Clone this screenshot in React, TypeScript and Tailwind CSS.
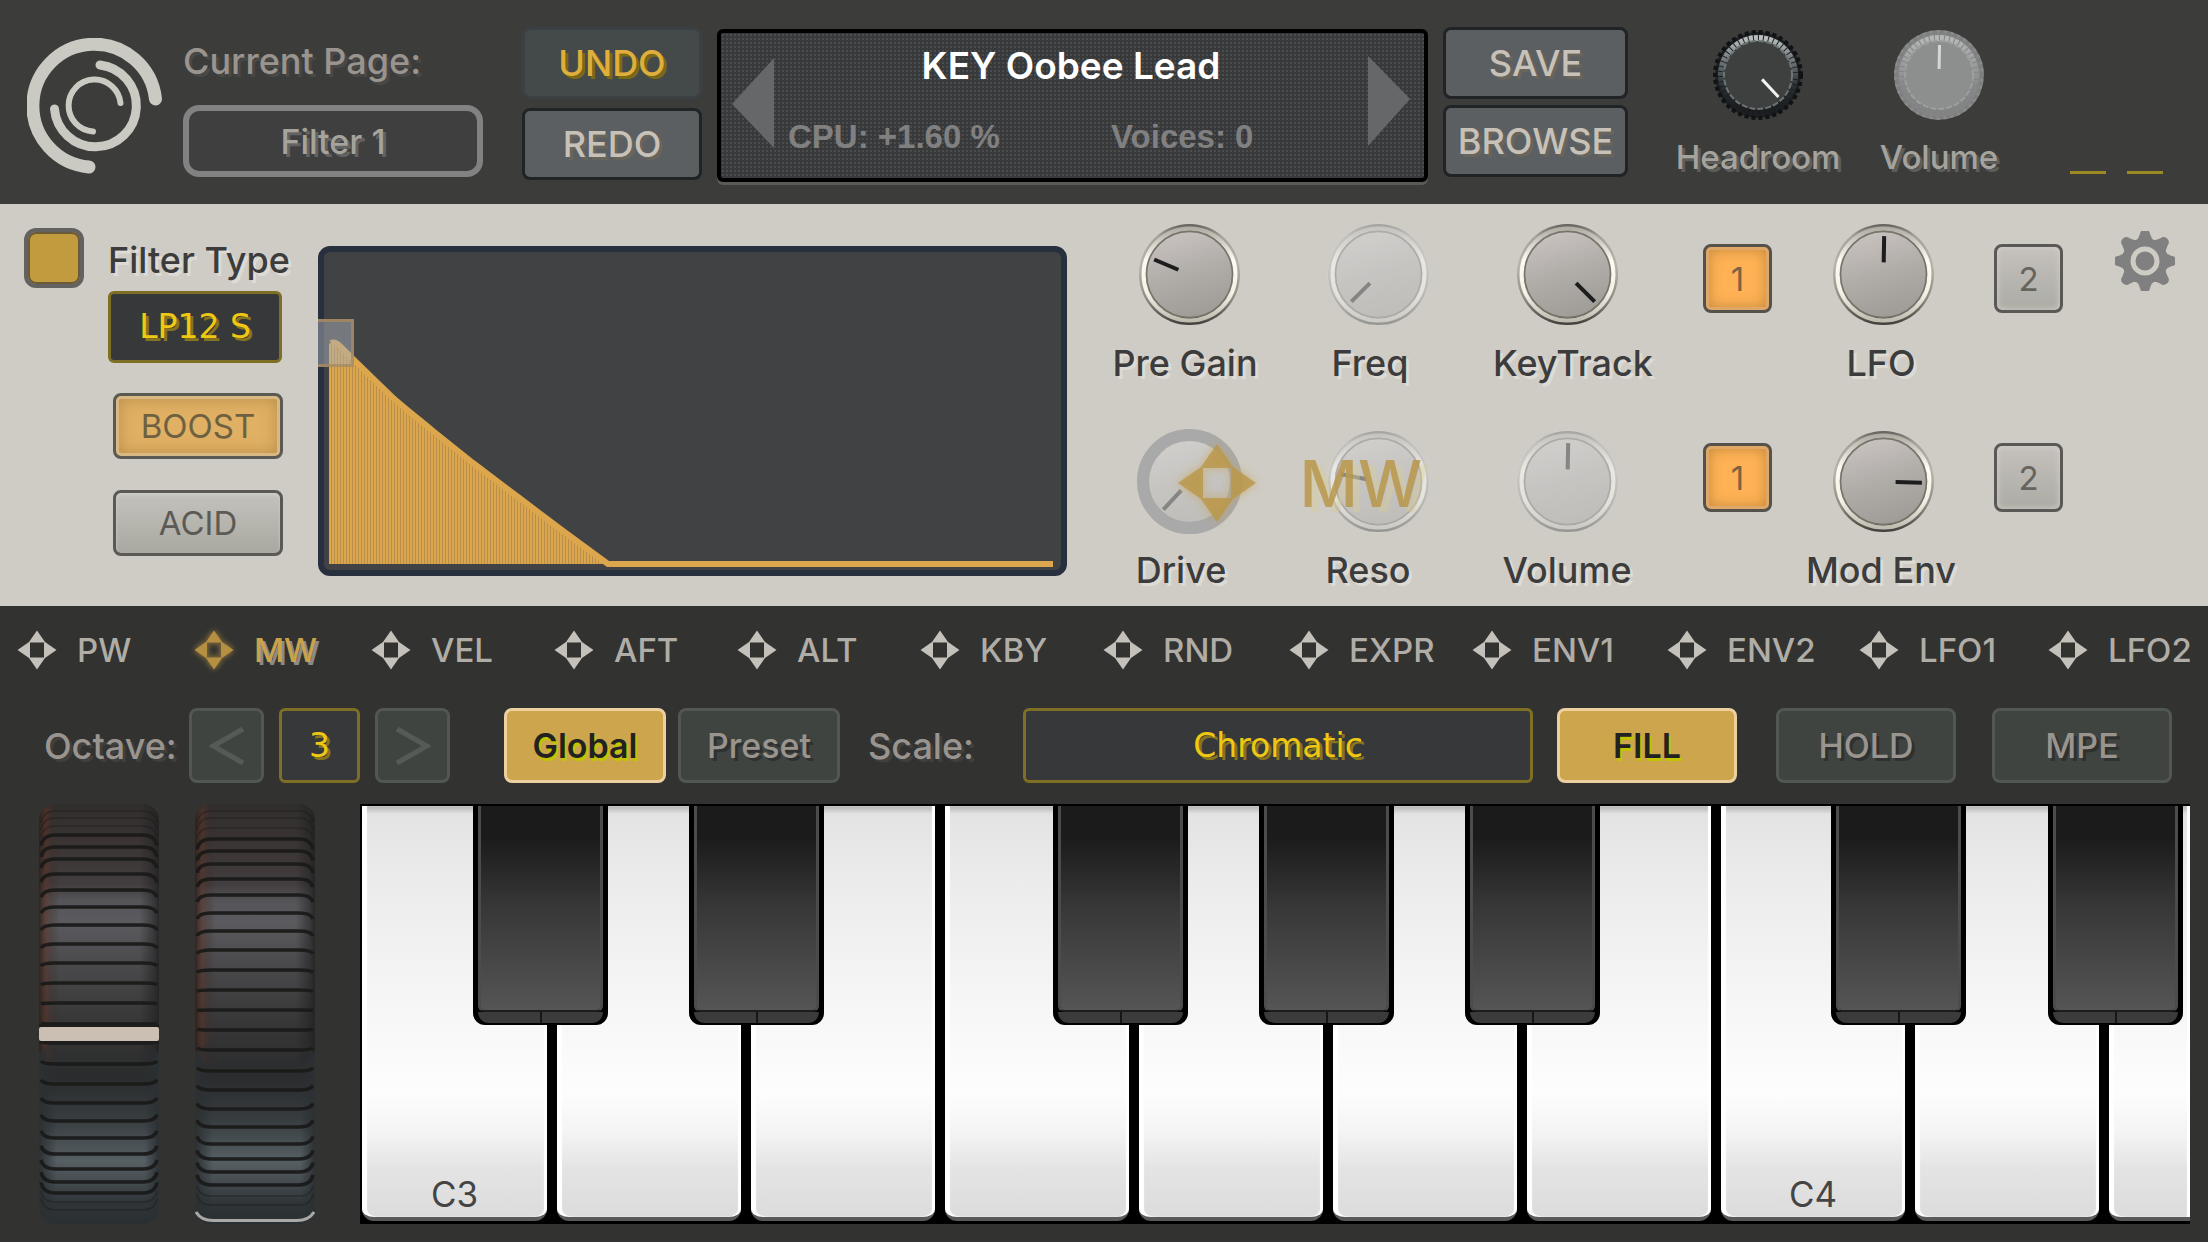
import React, { useState } from 'react';
import { clsx } from 'clsx';

const KNOB_LABEL = 'text-[36px] leading-10 font-medium text-[#3c3c3c] whitespace-nowrap [text-shadow:3px_3px_0_#dedbd5]';
const GOLD_FIELD =
  'appearance-none rounded-md border-3 border-[#7f6f25] bg-[#373839] text-center text-[33px] text-[#f0c814] [font-family:"DejaVu_Sans",sans-serif] [text-align-last:center] [text-shadow:3px_3px_0_#86741f] outline-none';
const TOP_BUTTON = 'h-18 w-full rounded-lg border-3 text-[36px] leading-10 font-medium';
const TOP_GREY = 'border-[#202426] bg-[#5b5f62] text-[#c8c1b8] [text-shadow:3px_3px_0_#68655c]';

const modSources = ['PW', 'MW', 'VEL', 'AFT', 'ALT', 'KBY', 'RND', 'EXPR', 'ENV1', 'ENV2', 'LFO1', 'LFO2'];

const whiteKeys = ['C3', 'D3', 'E3', 'F3', 'G3', 'A3', 'B3', 'C4', 'D4', 'E4'];

// left edge of each black key, in units of the 1830 wide keybed
const KEYBED = 1830;
const blackKeys = [
  { note: 'C#3', x: 113 },
  { note: 'D#3', x: 329 },
  { note: 'F#3', x: 693 },
  { note: 'G#3', x: 899 },
  { note: 'A#3', x: 1105 },
  { note: 'C#4', x: 1471 },
  { note: 'D#4', x: 1688 },
];

const Logo = () => (
  <svg viewBox="0 0 136 136" className="mt-[11px] size-[136px] shrink-0" fill="none" stroke="#cac9c2" strokeLinecap="round">
    <path d="M128.500 61 A61.500 61.500 0 1 0 62 129" strokeWidth="13" />
    <path d="M73 27 A41 41 0 1 1 27.500 71" strokeWidth="9" />
    <path d="M93.500 65 A26 26 0 1 0 66 93.500" strokeWidth="6" />
  </svg>
);

const Diamond = ({ color, className }: { color: string; className?: string }) => (
  <svg viewBox="0 0 40 40" className={clsx('shrink-0', className)} fill={color}>
    <path fillRule="evenodd" d="M20 0.500 L28 12 L39.500 20 L28 28 L20 39.500 L12 28 L0.500 20 L12 12 Z M13 12.500 V27.500 H27 V12.500 Z" />
  </svg>
);

const Gear = () => (
  <svg viewBox="-30 -30 60 60" className="size-[60px]" fill="#808080">
    <circle r="23" />
    {[0, 45, 90, 135, 180, 225, 270, 315].map((a) => (
      <path key={a} transform={`rotate(${a})`} d="M-10 -19 Q-6.500 -22 -5 -27 A5 4.600 0 0 1 5 -27 Q6.500 -22 10 -19 Z" />
    ))}
    <circle r="12" fill="none" stroke="#cfccc5" strokeWidth="5" />
  </svg>
);

const KnobDefs = () => (
  <svg className="absolute size-0" aria-hidden="true">
    <defs>
      <linearGradient id="rim" x1="0" y1="0" x2="0" y2="1">
        <stop offset="0" stopColor="#62605b" />
        <stop offset="0.12" stopColor="#a5a29a" />
        <stop offset="0.4" stopColor="#b7b4ac" />
        <stop offset="0.75" stopColor="#8d8a82" />
        <stop offset="1" stopColor="#3f3e3a" />
      </linearGradient>
      <linearGradient id="shine" x1="0" y1="0" x2="0" y2="1">
        <stop offset="0" stopColor="#b1aea6" />
        <stop offset="0.35" stopColor="#fdfbf2" />
        <stop offset="0.7" stopColor="#f4f1e6" />
        <stop offset="1" stopColor="#c0bcb0" />
      </linearGradient>
      <linearGradient id="face" x1="0.3" y1="0" x2="0.6" y2="1">
        <stop offset="0" stopColor="#c9c3c0" />
        <stop offset="0.5" stopColor="#b0aca8" />
        <stop offset="1" stopColor="#9f9c97" />
      </linearGradient>
      <linearGradient id="darkRim" x1="0" y1="0" x2="0" y2="1">
        <stop offset="0" stopColor="#b9bdbd" />
        <stop offset="0.35" stopColor="#666d70" />
        <stop offset="0.65" stopColor="#2a2f32" />
        <stop offset="1" stopColor="#191b1c" />
      </linearGradient>
    </defs>
  </svg>
);

type KnobProps = {
  name: string;
  angle: number;
  dim?: boolean;
  ring?: boolean;
  labelClass?: string;
  children?: React.ReactNode;
};

const Knob = ({ name, angle, dim, ring, labelClass, children }: KnobProps) => (
  <label className="flex w-40 flex-col items-center gap-[18px]">
    <span className="relative block size-[101px]">
      <svg viewBox="-50 -50 100 100" className="size-full overflow-visible">
        <circle r="50" fill="url(#rim)" />
        <circle r="45.500" fill="none" stroke="url(#shine)" strokeWidth="4" />
        <circle r="42.500" fill="url(#face)" stroke="#77736a" strokeWidth="1.500" />
        <line y1="-12" y2="-38" stroke="#1d1d1d" strokeWidth="4" transform={`rotate(${angle})`} />
        {dim && <circle r="50.500" fill="#d8d8d6" fillOpacity="0.560" />}
        {ring && <circle r="46" fill="none" stroke="#a9a9a9" strokeWidth="12" />}
      </svg>
      {children}
      <input type="range" min={-137} max={137} defaultValue={angle} className="absolute inset-0 size-full opacity-0" />
    </span>
    <span className={clsx(KNOB_LABEL, labelClass)}>{name}</span>
  </label>
);

const HeaderKnob = ({ name, angle, dim, className }: { name: string; angle: number; dim?: boolean; className: string }) => (
  <label className={clsx('mt-[3px] flex shrink-0 flex-col items-center gap-[17px]', className)}>
    <span className="relative block size-[90px]">
      <svg viewBox="-45 -45 90 90" className="size-full">
        <circle r="43" fill="#1d2022" />
        <circle r="43" fill="none" stroke="#101213" strokeWidth="4" strokeDasharray="4 3" />
        <circle r="37" fill="none" stroke="url(#darkRim)" strokeWidth="6" strokeDasharray="4 1" />
        <circle r="34" fill="#3d403f" stroke="#6d7474" strokeWidth="2" strokeDasharray="6 2" />
        {dim && <circle r="45" fill="#b4b4b4" fillOpacity="0.680" />}
        <line y1="-6" y2="-30" stroke={dim ? '#d6d6d6' : '#f2f2f2'} strokeWidth="3" transform={`rotate(${angle})`} />
      </svg>
      <input type="range" min={-137} max={137} defaultValue={angle} className="absolute inset-0 size-full opacity-0" />
    </span>
    <span className="text-[33px] leading-10 font-medium text-[#a5a39c] [text-shadow:3px_3px_0_#5d5d5b]">{name}</span>
  </label>
);

const SlotButton = ({ slot, on, className }: { slot: number; on?: boolean; className?: string }) => (
  <button
    type="button"
    className={clsx(
      'size-[69px] shrink-0 rounded-lg border-3 text-[33px] leading-8 font-normal',
      on
        ? 'border-[#55524c] bg-[#ffb255] text-[#7b6440] shadow-[inset_0_0_0_3px_#dfa868,inset_0_0_14px_3px_#c48a3e]'
        : 'border-[#5a5955] bg-linear-to-b from-[#c5c1bd] to-[#acaba4] text-[#66645c] shadow-[inset_0_0_6px_#d5d3cd]',
      className,
    )}
  >
    {slot}
  </button>
);

const FilterGraph = () => (
  <div className="relative mt-[22px] ml-[35px] h-[330px] min-w-0 flex-1 rounded-xl border-6 border-[#28303f] bg-[#414243]">
    <svg viewBox="0 0 737 318" preserveAspectRatio="none" className="block size-full">
      <defs>
        <pattern id="bars" width="3" height="8" patternUnits="userSpaceOnUse">
          <rect width="3" height="8" fill="#dca64d" />
          <rect x="1" width="1" height="8" fill="#b88e4c" />
        </pattern>
      </defs>
      <path d="M5 312 V92 L8 90 L17 95 L30 108 L68 143 L109 178 L149 210 L194 244 L239 279 L282 312 Z" fill="url(#bars)" />
      <path d="M7 91 Q11 89 17 95 L30 108 L68 145 C80 156 95 167 109 179 L149 211 L194 245 L239 279 L284 312 H729" fill="none" stroke="#dca64d" strokeWidth="6" />
    </svg>
    <div className="absolute top-[67px] -left-1.5 h-12 w-9 border-y-3 border-r-3 border-[#a98a5f]/80 bg-[#a9adb5]/50" />
  </div>
);

const toggleStyle = (on: boolean) =>
  on
    ? 'bg-[#e0b064] text-[#6e6142] shadow-[inset_0_0_0_3px_#d9b983,inset_0_0_16px_3px_#b98f4c]'
    : 'bg-linear-to-b from-[#c3c2bd] to-[#a9a8a0] text-[#5b5a54] shadow-[inset_0_2px_3px_#d0cfca]';

const chipStyle = (on: boolean) =>
  on
    ? 'border-[#ecd0a0] bg-[#cca54c] text-[#222] font-semibold [text-shadow:2px_3px_0_#c2c400]'
    : 'border-[#515753] bg-[#3f4440] text-[#9a948f] font-medium [text-shadow:3px_3px_0_#2f3130]';

const CHIP = 'h-[75px] shrink-0 rounded-lg border-3 text-[34px] leading-10';

// rib edges, measured down a 420 unit tall wheel
const pitchRibs = [7, 14, 22, 31, 43, 55, 70, 86, 103, 121, 140, 159, 179, 199, 220, 239, 260, 280, 299, 317, 334, 350, 365, 378, 389, 398, 406];
const modRibs = [7, 14, 24, 35, 47, 60, 75, 91, 109, 127, 146, 166, 186, 206, 226, 246, 267, 286, 305, 323, 340, 355, 368, 381, 392, 401];

const Wheel = ({ id, name, ribs, className }: { id: string; name: string; ribs: number[]; className?: string }) => (
  <label className={clsx('relative block h-[420px] w-[120px] shrink-0', className)}>
    <svg viewBox="0 0 120 420" className="block size-full">
      <defs>
        <linearGradient id={id} x1="0" y1="0" x2="0" y2="1">
          <stop offset="0" stopColor="#302e2c" />
          <stop offset="0.1" stopColor="#3b3535" />
          <stop offset="0.19" stopColor="#423d3e" />
          <stop offset="0.23" stopColor="#555458" />
          <stop offset="0.28" stopColor="#5b5a5e" />
          <stop offset="0.38" stopColor="#4a4a4d" />
          <stop offset="0.52" stopColor="#383737" />
          <stop offset="0.65" stopColor="#2a2c2d" />
          <stop offset="0.75" stopColor="#373c3f" />
          <stop offset="0.85" stopColor="#565f64" />
          <stop offset="0.91" stopColor="#41484c" />
          <stop offset="0.95" stopColor="#2f3437" />
          <stop offset="1" stopColor="#2a2f32" />
        </linearGradient>
        <linearGradient id={`${id}-side`}>
          <stop offset="0" stopColor="#2a201c" stopOpacity="0.9" />
          <stop offset="0.06" stopColor="#5a3327" stopOpacity="0.55" />
          <stop offset="0.17" stopColor="#2a2625" stopOpacity="0" />
          <stop offset="0.84" stopColor="#222" stopOpacity="0" />
          <stop offset="0.96" stopColor="#222" stopOpacity="0.6" />
          <stop offset="1" stopColor="#222" stopOpacity="0.9" />
        </linearGradient>
        <linearGradient id={`${id}-low`}>
          <stop offset="0" stopColor="#2b3033" />
          <stop offset="0.15" stopColor="#2b3033" stopOpacity="0" />
          <stop offset="0.88" stopColor="#2b3033" stopOpacity="0" />
          <stop offset="1" stopColor="#2b3033" />
        </linearGradient>
      </defs>
      <rect width="120" height="420" rx="16" fill={`url(#${id})`} />
      <rect width="120" height="260" rx="16" fill={`url(#${id}-side)`} />
      <rect y="240" width="120" height="180" rx="16" fill={`url(#${id}-low)`} />
      {ribs.map((y) => {
        const bend = (210 - y) / 17;
        const nearEdge = Math.min(y, 420 - y) < 30;
        return (
          <path
            key={y}
            d={`M2 ${y + bend} Q4 ${y} 16 ${y} H104 Q116 ${y} 118 ${y + bend}`}
            fill="none"
            stroke="#1a1a19"
            strokeWidth={nearEdge ? 1.5 : 3.5}
            strokeOpacity={nearEdge ? 0.4 : 0.95}
          />
        );
      })}
      {id === 'pitch' ? (
        <>
          <rect y="220" width="120" height="20" fill="#1d1d1c" />
          <rect y="223" width="120" height="14" rx="2" fill="#cbbfb4" />
        </>
      ) : (
        <path d="M1 408 Q6 416.500 18 416.500 H102 Q114 416.500 119 408" fill="none" stroke="#a9a9a7" strokeWidth="3" />
      )}
    </svg>
    <input type="range" aria-label={name} className="absolute inset-0 size-full opacity-0" />
  </label>
);

const Keyboard = () => (
  <div className="relative ml-[45px] h-[420px] min-w-0 flex-1 overflow-hidden bg-black pt-0.5">
    <div className="grid h-full grid-cols-[192fr_194fr_194fr_194fr_194fr_194fr_194fr_194fr_194fr_86fr]">
      {whiteKeys.map((note, i) => (
        <button
          key={note}
          type="button"
          aria-label={note}
          className={clsx(
            'mb-[3px] flex items-end justify-center border-b-4 border-b-[#5a5a5a] pb-[3px] text-[35px] leading-10 font-normal text-[#444]',
            'bg-[linear-gradient(#b5b5b5,#e3e3e3_2%,#ececec_20%,#f5f5f5_45%,#fdfdfd_70%,#f3f3f3_80%,#e4e4e4_88%,#dcdcdc)] shadow-[inset_5px_0_1px_#fff,inset_-3px_0_1px_#fff]',
            i === 0 ? 'ml-0.5' : 'ml-[5px]',
            i === whiteKeys.length - 1 ? 'rounded-bl-xl' : 'mr-[5px] rounded-b-xl',
          )}
        >
          {note.startsWith('C') ? note : ''}
        </button>
      ))}
    </div>
    {blackKeys.map(({ note, x }) => (
      <button
        key={note}
        type="button"
        aria-label={note}
        style={{ left: `${(x / KEYBED) * 100}%` }}
        className="absolute top-0 flex h-[221px] w-[7.4%] flex-col items-center rounded-b-xl bg-black px-[5px] pt-0.5 pb-0.5"
      >
        <span className="h-[206px] w-full shrink-0 rounded-b-md border-x-3 border-b-2 border-x-[#4c4c4c] border-b-[#1c1c1c] bg-linear-to-b from-[#1b1b1b] from-15% via-[#383838] to-[#555]" />
        <span className="flex w-full flex-1 justify-center rounded-b-xl bg-[#3b3b3b]">
          <span className="h-full w-0.5 bg-[#161616]" />
        </span>
      </button>
    ))}
  </div>
);

export default function App() {
  const [boost, setBoost] = useState(true);
  const [acid, setAcid] = useState(false);
  const [scope, setScope] = useState('Global');
  const [fill, setFill] = useState(true);
  const [hold, setHold] = useState(false);
  const [mpe, setMpe] = useState(false);

  return (
    <div className="min-h-screen bg-[#323230] [font-family:Inter,sans-serif]">
      <KnobDefs />

      {/* Top bar */}
      <header className="flex items-start bg-[#3c3c3a] pt-[27px] pr-[45px] pb-[22px] pl-[27px]">
        <Logo />
        <div className="mt-[14px] ml-5 flex w-[300px] shrink-0 flex-col gap-6">
          <label htmlFor="page" className="text-[36px] leading-10 font-medium text-[#9a948f] [text-shadow:3px_3px_0_#484847]">
            Current Page:
          </label>
          <select
            id="page"
            className="h-18 w-full appearance-none rounded-2xl border-6 border-[#828282] bg-[#3f3f3f] text-center text-[34px] font-medium text-[#a5a39c] [text-align-last:center] [text-shadow:3px_3px_0_#626262]"
          >
            <option>Filter 1</option>
          </select>
        </div>
        <div className="ml-[39px] flex w-[180px] shrink-0 flex-col gap-[9px]">
          <button type="button" className={clsx(TOP_BUTTON, 'border-[#3b4044] bg-[#444949] text-[#dfae3c] [text-shadow:3px_3px_0_#7a6a14]')}>
            UNDO
          </button>
          <button type="button" className={clsx(TOP_BUTTON, TOP_GREY)}>REDO</button>
        </div>

        <div className="mt-0.5 ml-[15px] flex h-[153px] min-w-0 flex-1 rounded-md border-4 border-black bg-[#38393b] bg-[radial-gradient(#4b4c4e_1px,transparent_1px)] bg-size-[4px_4px] pr-[14px] pl-[11px] shadow-[0_3px_0_#5a5a58]">
          <button type="button" aria-label="Previous preset" className="mt-[25px] h-[90px] shrink-0">
            <svg viewBox="0 0 42 90" className="h-[90px] w-[42px]"><path d="M0 46 L42 0 V90 Z" fill="#666769" /></svg>
          </button>
          <div className="min-w-0 flex-1 pt-[11px]">
            <p className="text-center text-[37px] leading-11 font-semibold text-white">KEY Oobee Lead</p>
            <div className="mt-[29px] grid grid-cols-[323fr_257fr] pl-[14px] text-[33px] leading-10 font-bold whitespace-nowrap text-[#808080] [font-family:'Liberation_Sans',sans-serif]">
              <p>CPU: +1.60 %</p>
              <p>Voices: 0</p>
            </div>
          </div>
          <button type="button" aria-label="Next preset" className="mt-[23px] h-[90px] shrink-0">
            <svg viewBox="0 0 42 90" className="h-[90px] w-[42px]"><path d="M42 43 L0 0 V90 Z" fill="#666769" /></svg>
          </button>
        </div>

        <div className="ml-[15px] flex w-[185px] shrink-0 flex-col gap-1.5">
          <button type="button" className={clsx(TOP_BUTTON, TOP_GREY)}>SAVE</button>
          <button type="button" className={clsx(TOP_BUTTON, TOP_GREY)}>BROWSE</button>
        </div>
        <HeaderKnob name="Headroom" angle={137} className="ml-[45px] w-[170px]" />
        <HeaderKnob name="Volume" angle={1} dim className="ml-9 w-30" />
        <div className="mt-36 ml-[71px] flex shrink-0 gap-[21px]">
          <span className="h-[3px] w-9 bg-[#9c8a22]" />
          <span className="h-[3px] w-9 bg-[#9c8a22]" />
        </div>
      </header>

      {/* Filter panel */}
      <main className="flex items-start bg-[#cfccc5] pt-5 pr-[33px] pb-4 pl-6">
        <input
          type="checkbox"
          aria-label="Filter on"
          defaultChecked
          className="mt-1 size-[60px] shrink-0 appearance-none rounded-xl border-4 border-[#636260] bg-[#c29b3f] shadow-[inset_0_0_0_2px_#6b5a3a]"
        />
        <div className="mt-4 ml-6 flex w-[175px] shrink-0 flex-col">
          <label htmlFor="filter-type" className={KNOB_LABEL}>Filter Type</label>
          <select id="filter-type" className={clsx(GOLD_FIELD, 'mt-[11px] h-18 w-[174px]')}>
            <option>LP12 S</option>
          </select>
          <button
            type="button"
            onClick={() => setBoost(!boost)}
            className={clsx('mt-[30px] ml-[5px] h-[66px] rounded-lg border-3 border-[#5b5953] text-[33px] leading-10', toggleStyle(boost))}
          >
            BOOST
          </button>
          <button
            type="button"
            onClick={() => setAcid(!acid)}
            className={clsx('mt-[31px] ml-[5px] h-[66px] rounded-lg border-3 border-[#5b5953] text-[33px] leading-10', toggleStyle(acid))}
          >
            ACID
          </button>
        </div>

        <FilterGraph />

        <div className="ml-[42px] flex shrink-0 flex-col gap-12">
          <div className="flex items-start">
            <Knob name="Pre Gain" angle={-67} labelClass="pr-2" />
            <div className="ml-[29px]"><Knob name="Freq" angle={-135} dim labelClass="pr-4" /></div>
            <div className="ml-[29px]"><Knob name="KeyTrack" angle={135} labelClass="pl-3" /></div>
            <SlotButton slot={1} on className="mt-5 ml-14" />
            <div className="ml-[31px]"><Knob name="LFO" angle={1} labelClass="pr-1" /></div>
            <SlotButton slot={2} className="mt-5 ml-[31px]" />
            <button type="button" aria-label="Settings" className="mt-[7px] ml-[52px]"><Gear /></button>
          </div>
          <div className="flex items-start">
            <Knob name="Drive" angle={-137} dim ring labelClass="pr-4">
              <Diamond color="#b9964acc" className="absolute top-3 left-[38px] size-20 drop-shadow-[0_0_5px_#c9a24acc]" />
            </Knob>
            <div className="ml-[29px]">
              <Knob name="Reso" angle={-79} dim labelClass="pr-5">
                <span className="absolute top-[13px] -left-7 text-[64px] leading-20 font-medium text-[#b9964a]/85 [text-shadow:7px_5px_1px_#d8cc9466]">MW</span>
              </Knob>
            </div>
            <div className="ml-[29px]"><Knob name="Volume" angle={1} dim /></div>
            <SlotButton slot={1} on className="mt-3 ml-14" />
            <div className="ml-[31px]"><Knob name="Mod Env" angle={92} labelClass="pr-1" /></div>
            <SlotButton slot={2} className="mt-3 ml-[31px]" />
          </div>
        </div>
      </main>

      {/* Modulation sources */}
      <nav className="grid grid-cols-[177fr_177fr_183fr_183fr_183fr_183fr_186fr_183fr_195fr_192fr_189fr_160fr] pt-6 pl-[17px]">
        {modSources.map((src) => (
          <button
            key={src}
            type="button"
            className={clsx(
              'flex min-w-0 items-center gap-5 text-[33px] leading-10 font-medium',
              src === 'MW' ? 'text-[#c9a24a] [text-shadow:3px_3px_0_#8b8a86]' : 'text-[#b0ada7]',
            )}
          >
            <Diamond
              color={src === 'MW' ? '#b58f42' : '#c4c0ba'}
              className={clsx('size-10', src === 'MW' && 'drop-shadow-[0_0_3px_#b58f42]')}
            />
            {src}
          </button>
        ))}
      </nav>

      {/* Keyboard settings */}
      <section className="flex items-center pt-[38px] pr-9 pl-[44px]">
        <label htmlFor="octave" className="w-[145px] shrink-0 text-[36px] leading-10 font-medium text-[#9a948f] [text-shadow:3px_3px_0_#3f3f3d]">
          Octave:
        </label>
        <button type="button" aria-label="Octave down" className="flex h-[75px] w-[75px] shrink-0 items-center justify-center rounded-lg border-3 border-[#515753] bg-[#3f4440]">
          <svg viewBox="0 0 36 40" className="h-10 w-9" fill="none" stroke="#545b57" strokeWidth="5"><path d="M34 3 L4 20 L34 37" /></svg>
        </button>
        <input id="octave" readOnly defaultValue="3" className={clsx(GOLD_FIELD, 'ml-[15px] h-[75px] w-[81px] shrink-0')} />
        <button type="button" aria-label="Octave up" className="ml-[15px] flex h-[75px] w-[75px] shrink-0 items-center justify-center rounded-lg border-3 border-[#515753] bg-[#3f4440]">
          <svg viewBox="0 0 36 40" className="h-10 w-9" fill="none" stroke="#545b57" strokeWidth="5"><path d="M2 3 L32 20 L2 37" /></svg>
        </button>
        <button type="button" onClick={() => setScope('Global')} className={clsx(CHIP, 'ml-[54px] w-[162px]', chipStyle(scope === 'Global'))}>
          Global
        </button>
        <button type="button" onClick={() => setScope('Preset')} className={clsx(CHIP, 'ml-3 w-[162px]', chipStyle(scope === 'Preset'))}>
          Preset
        </button>
        <label htmlFor="scale" className="ml-7 w-[155px] shrink-0 text-[36px] leading-10 font-medium text-[#9a948f] [text-shadow:3px_3px_0_#3f3f3d]">
          Scale:
        </label>
        <select id="scale" className={clsx(GOLD_FIELD, 'h-[75px] min-w-0 flex-1')}>
          <option>Chromatic</option>
        </select>
        <button type="button" onClick={() => setFill(!fill)} className={clsx(CHIP, 'ml-6 w-[180px]', chipStyle(fill))}>FILL</button>
        <button type="button" onClick={() => setHold(!hold)} className={clsx(CHIP, 'ml-[39px] w-[180px]', chipStyle(hold))}>HOLD</button>
        <button type="button" onClick={() => setMpe(!mpe)} className={clsx(CHIP, 'ml-9 w-[180px]', chipStyle(mpe))}>MPE</button>
      </section>

      {/* Wheels and keys */}
      <section className="flex pt-[21px] pr-[18px] pb-[18px] pl-[39px]">
        <Wheel id="pitch" name="Pitch wheel" ribs={pitchRibs} />
        <Wheel id="mod" name="Mod wheel" ribs={modRibs} className="ml-9" />
        <Keyboard />
      </section>
    </div>
  );
}
